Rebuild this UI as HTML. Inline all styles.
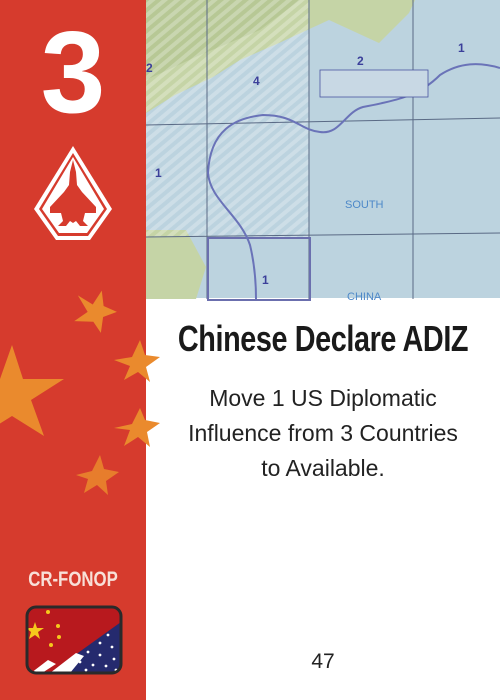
<!DOCTYPE html>
<html><head><meta charset="utf-8"><style>
html,body{margin:0;padding:0}
body{width:500px;height:700px;position:relative;overflow:hidden;background:#fff;font-family:"Liberation Sans",sans-serif}
.strip{position:absolute;left:0;top:0;width:146px;height:700px;background:#d63b2d}
.num{position:absolute;left:0;width:146px;top:14px;text-align:center;color:#fff;font-weight:bold;font-size:116px;line-height:116px}
.title{position:absolute;left:73px;width:500px;top:318px;text-align:center;white-space:nowrap;font-weight:bold;font-size:36px;letter-spacing:-0.5px;color:#1a1a1a;transform:scaleX(0.8)}
.body{position:absolute;left:146px;width:354px;top:381px;text-align:center;font-size:23px;line-height:35px;color:#222}
.pg{position:absolute;left:146px;width:354px;top:650px;text-align:center;font-size:21px;color:#222}
.cr{position:absolute;left:0;width:146px;top:568px;text-align:center;color:#f8e0d8;font-weight:bold;font-size:21px;transform:scaleX(0.8)}
</style></head><body>
<div class="strip"></div>
<svg style="position:absolute;left:0;top:0" width="500" height="700">
<defs>
<pattern id="h" width="8" height="8" patternUnits="userSpaceOnUse" patternTransform="rotate(-40)"><rect width="8" height="4" fill="#fff" opacity="0.25"/></pattern>
<clipPath id="fc"><rect x="27" y="607" width="94" height="66" rx="9"/></clipPath>
</defs>
<rect x="146" y="0" width="354" height="298" fill="#bcd3df"/>
<polygon points="146,0 415,0 409,13 379,43 329,20 279,43 240,60 213,77 175,95 146,113" fill="#c5d4a6"/>
<polygon points="146,0 300,0 260,30 200,55 146,80" fill="#aebf8a" opacity="0.6"/>
<polygon points="146,230 186,230 206,267 196,299 146,299" fill="#c5d4a6"/>
<rect x="146" y="0" width="163" height="237" fill="url(#h)"/>
<g stroke="#5a6a85" stroke-width="1" fill="none">
<line x1="207" y1="0" x2="207" y2="299"/><line x1="309" y1="0" x2="309" y2="299"/><line x1="413" y1="0" x2="413" y2="299"/>
<line x1="146" y1="125" x2="500" y2="118"/><line x1="146" y1="237" x2="500" y2="233"/>
</g>
<rect x="208" y="238" width="102" height="62" fill="none" stroke="#6b6fae" stroke-width="2"/>
<path d="M500,68 C480,62 460,62 440,75 C420,95 400,100 363,107 C345,112 340,135 320,132 C300,130 295,115 263,115 C235,118 210,130 208,173 C210,200 240,215 250,245 C256,270 256,290 256,299" fill="none" stroke="#6a73b8" stroke-width="2"/>
<rect x="320" y="70" width="108" height="27" fill="#c8d8e4" stroke="#4a55a0" stroke-width="0.8"/>
<g fill="#3b3f9a" font-weight="bold" font-size="12"><text x="253" y="85">4</text><text x="357" y="65">2</text><text x="458" y="52">1</text><text x="155" y="177">1</text><text x="262" y="284">1</text><text x="146" y="72">2</text></g>
<text x="345" y="208" fill="#4d88c8" font-size="11">SOUTH</text>
<text x="347" y="300" fill="#4d88c8" font-size="11">CHINA</text>
<g fill="#ea8a2d">
<polygon points="12,345 23,379 64,379 31,400 44,436 12,416 -20,436 -8,400 -40,379 0,379"/>
<polygon points="99,290 103,305 117,309 104,316 104,332 95,322 76,324 88,313 76,298 92,305" transform="rotate(8 96 310)"/>
<polygon points="140,340 145,355 160,357 146,367 150,382 138,372 124,380 130,366 114,360 132,357"/>
<polygon points="140,408 145,420 160,423 147,432 150,447 138,437 124,446 130,430 114,428 132,424"/>
<polygon points="100,455 104,469 119,472 106,481 108,495 97,485 84,493 88,479 76,475 92,471" opacity="0.85"/>
</g>
<polygon points="73,146 112,209 90,240 56,240 34,209" fill="#fff"/>
<polygon points="73,153 107,209 88,236 58,236 39,209" fill="#d63b2d"/>
<polygon points="73,157 104,209 87,233 59,233 42,209" fill="#fff"/>
<path d="M73,160 L76,172 L77,185 L82,192 L96,207 L96,213 L85,213 L83,221 L88,226 L80,226 L76,221 L73,223 L70,221 L66,226 L58,226 L63,221 L61,213 L50,213 L50,207 L64,192 L69,185 L70,172 Z" fill="#d63b2d"/>
<g clip-path="url(#fc)">
<rect x="27" y="607" width="94" height="66" fill="#b8191e"/>
<polygon points="121,622 121,673 50,673" fill="#252a6e"/>
<polygon points="50,673 70,673 84,656 76,653" fill="#fff"/>
<polygon points="31,673 42,673 56,664 48,660" fill="#fff"/>
<g fill="#f5c81c"><polygon points="35,622 37,628 44,628 38,632 40,639 35,635 29,639 31,632 26,628 33,628"/><circle cx="58" cy="626" r="2"/><circle cx="59" cy="637" r="2"/><circle cx="51" cy="645" r="2"/><circle cx="48" cy="612" r="2"/></g>
<g fill="#fff"><circle cx="108" cy="635" r="1.4"/><circle cx="100" cy="643" r="1.4"/><circle cx="112" cy="647" r="1.4"/><circle cx="88" cy="652" r="1.4"/><circle cx="100" cy="655" r="1.4"/><circle cx="114" cy="659" r="1.4"/><circle cx="80" cy="662" r="1.4"/><circle cx="93" cy="665" r="1.4"/><circle cx="106" cy="666" r="1.4"/><circle cx="116" cy="670" r="1.4"/><circle cx="86" cy="670" r="1.4"/></g>
</g>
<rect x="27" y="607" width="94" height="66" rx="9" fill="none" stroke="#2a2a2a" stroke-width="3"/>
</svg>
<div class="num">3</div>
<div class="title">Chinese Declare ADIZ</div>
<div class="body">Move 1 US Diplomatic<br>Influence from 3 Countries<br>to Available.</div>
<div class="pg">47</div>
<div class="cr">CR-FONOP</div>
</body></html>
